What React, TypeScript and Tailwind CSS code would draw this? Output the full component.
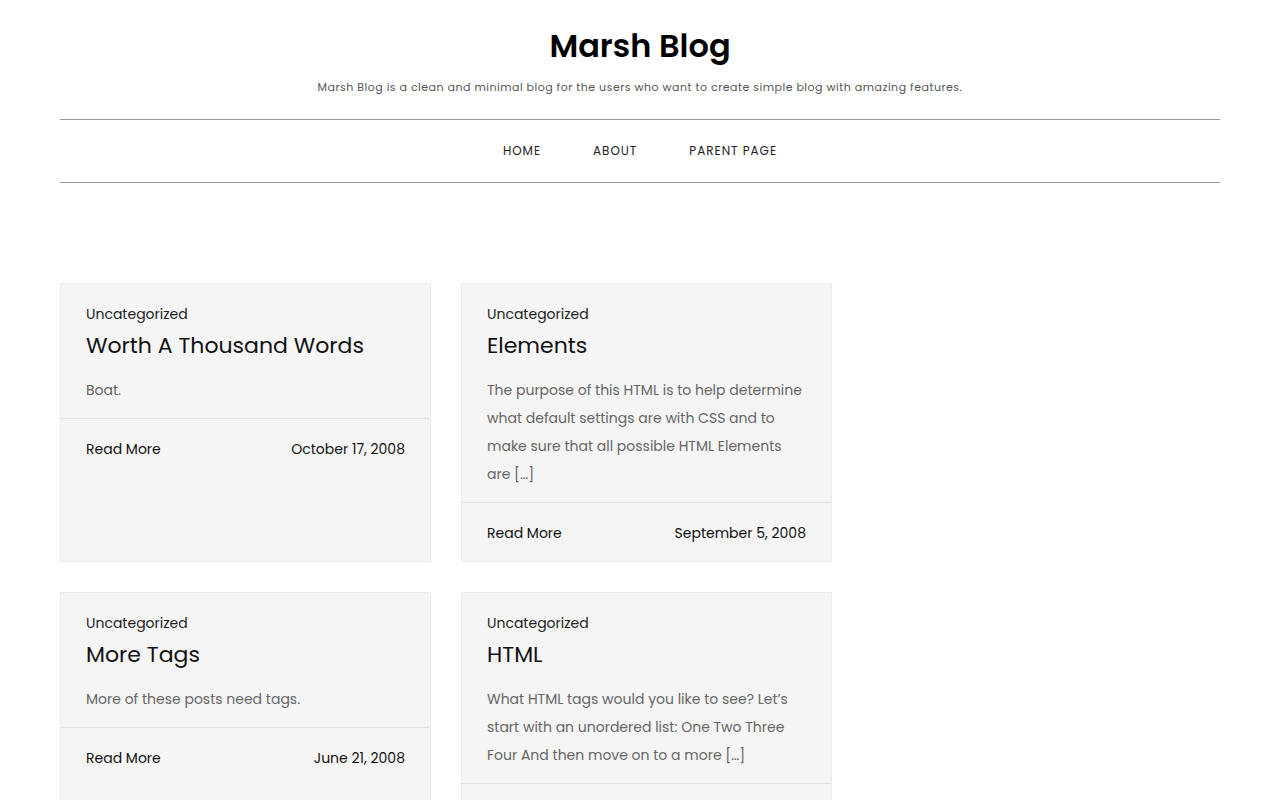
const FONT = "font-['Poppins','Inter','Noto_Sans',sans-serif]";

const posts = [
  {
    cat: 'Uncategorized',
    title: 'Worth A Thousand Words',
    excerpt: 'Boat.',
    date: 'October 17, 2008',
  },
  {
    cat: 'Uncategorized',
    title: 'Elements',
    excerpt:
      'The purpose of this HTML is to help determine what default settings are with CSS and to make sure that all possible HTML Elements are […]',
    date: 'September 5, 2008',
  },
  {
    cat: 'Uncategorized',
    title: 'More Tags',
    excerpt: 'More of these posts need tags.',
    date: 'June 21, 2008',
  },
  {
    cat: 'Uncategorized',
    title: 'HTML',
    excerpt:
      'What HTML tags would you like to see? Let’s start with an unordered list: One Two Three Four And then move on to a more […]',
    date: 'June 19, 2008',
  },
];

const nav = ['Home', 'About', 'Parent Page'];

export default function App() {
  return (
    <div className={`${FONT} min-h-screen bg-white text-[#111]`}>
      <div className="mx-auto w-[1160px]">
        {/* Branding */}
        <header className="flex flex-col items-center pt-[27px] pb-[24px]">
          <h1 className="text-[32px] font-semibold leading-[38px] text-black">Marsh Blog</h1>
          <p className="mt-[14px] text-[11px] leading-[16px] tracking-[0.5px] text-[#555]">
            Marsh Blog is a clean and minimal blog for the users who want to create simple blog with amazing features.
          </p>
        </header>

        {/* Navigation */}
        <nav className="flex h-[64px] items-center justify-center gap-[52px] border-y border-[#999]">
          {nav.map((n) => (
            <a key={n} href="#" className="text-[12px] uppercase tracking-[0.08em] text-[#222]">
              {n}
            </a>
          ))}
        </nav>

        {/* Posts */}
        <main className="mt-[100px] grid grid-cols-[371px_371px] gap-x-[30px] gap-y-[30px]">
          {posts.map((p) => (
            <article key={p.title} className="flex flex-col border border-[#ececec] bg-[#f5f5f5]">
              <div className="px-[25px] pt-[20px] pb-[14px]">
                <div className="text-[14px] leading-[20px] text-[#222]">{p.cat}</div>
                <h2 className="mt-[7px] text-[22px] leading-[30px] text-[#111]">{p.title}</h2>
                <p className="mt-[15px] text-[14px] leading-[28px] text-[#666]">{p.excerpt}</p>
              </div>
              <div className="flex items-center justify-between border-t border-[#e0e0e0] px-[25px] pt-[20px] pb-[18px] text-[14px] leading-[20px] text-[#111]">
                <a href="#">Read More</a>
                <span>{p.date}</span>
              </div>
            </article>
          ))}
        </main>
      </div>
    </div>
  );
}
